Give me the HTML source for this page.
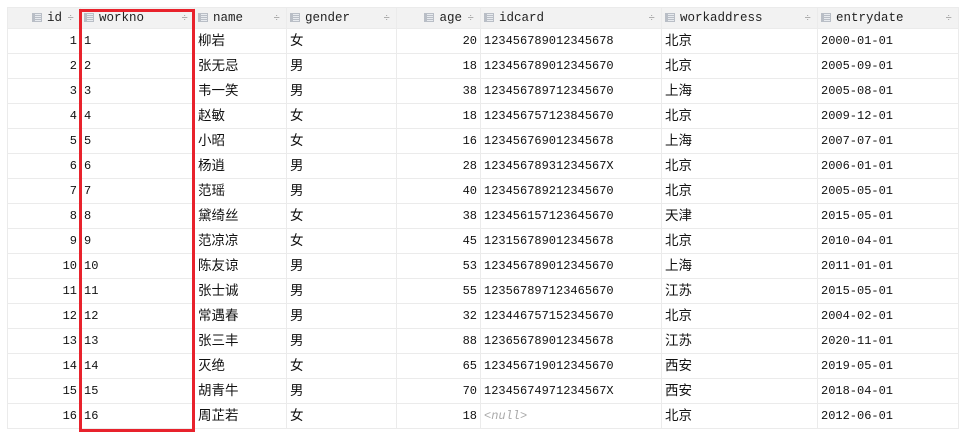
<!DOCTYPE html>
<html><head><meta charset="utf-8"><style>
body{margin:0;width:970px;height:437px;background:#fff;position:relative;overflow:hidden;font-family:"Liberation Mono","Noto Sans CJK SC",monospace;font-size:12px;color:#111}
table{position:absolute;left:7px;top:7px;border-collapse:collapse;table-layout:fixed}
td,th{border:1px solid #ebebeb;height:24px;padding:0 3px;white-space:nowrap;overflow:hidden;font-weight:normal;line-height:16px}
th{height:20px;background:#f2f2f2;text-align:left;color:#222;position:relative;font-size:12.5px}
th .ic{display:inline-block;width:10px;height:9px;background:#b9bec6;margin-right:5px;vertical-align:-1px;position:relative}
th .ic:after{content:"";position:absolute;left:3px;top:1px;width:6px;height:7px;background:repeating-linear-gradient(#e8ebef 0 1px,#b9bec6 1px 2px)}
th .s{position:absolute;right:6px;top:3px;color:#999;font-size:11px}
td.r{text-align:right}
.c{font-size:13.5px;font-family:"Noto Sans CJK SC",sans-serif;line-height:16px;padding-bottom:4px;height:20px}
.null{color:#aaa;font-style:italic}
.box{position:absolute;left:79px;top:9px;width:110px;height:417px;border:3px solid #e8222c}
</style></head><body>
<table>
<colgroup><col style="width:73px"><col style="width:114px"><col style="width:92px"><col style="width:110px"><col style="width:84px"><col style="width:181px"><col style="width:156px"><col style="width:141px"></colgroup>
<tr><th style="text-align:right;padding-right:18px"><span class="ic"></span>id<span class="s">÷</span></th><th><span class="ic"></span>workno<span class="s">÷</span></th><th><span class="ic"></span>name<span class="s">÷</span></th><th><span class="ic"></span>gender<span class="s">÷</span></th><th style="text-align:right;padding-right:18px"><span class="ic"></span>age<span class="s">÷</span></th><th><span class="ic"></span>idcard<span class="s">÷</span></th><th><span class="ic"></span>workaddress<span class="s">÷</span></th><th><span class="ic"></span>entrydate<span class="s">÷</span></th></tr>
<tr><td class="r">1</td><td>1</td><td class="c">柳岩</td><td class="c">女</td><td class="r">20</td><td>123456789012345678</td><td class="c">北京</td><td>2000-01-01</td></tr>
<tr><td class="r">2</td><td>2</td><td class="c">张无忌</td><td class="c">男</td><td class="r">18</td><td>123456789012345670</td><td class="c">北京</td><td>2005-09-01</td></tr>
<tr><td class="r">3</td><td>3</td><td class="c">韦一笑</td><td class="c">男</td><td class="r">38</td><td>123456789712345670</td><td class="c">上海</td><td>2005-08-01</td></tr>
<tr><td class="r">4</td><td>4</td><td class="c">赵敏</td><td class="c">女</td><td class="r">18</td><td>123456757123845670</td><td class="c">北京</td><td>2009-12-01</td></tr>
<tr><td class="r">5</td><td>5</td><td class="c">小昭</td><td class="c">女</td><td class="r">16</td><td>123456769012345678</td><td class="c">上海</td><td>2007-07-01</td></tr>
<tr><td class="r">6</td><td>6</td><td class="c">杨逍</td><td class="c">男</td><td class="r">28</td><td>12345678931234567X</td><td class="c">北京</td><td>2006-01-01</td></tr>
<tr><td class="r">7</td><td>7</td><td class="c">范瑶</td><td class="c">男</td><td class="r">40</td><td>123456789212345670</td><td class="c">北京</td><td>2005-05-01</td></tr>
<tr><td class="r">8</td><td>8</td><td class="c">黛绮丝</td><td class="c">女</td><td class="r">38</td><td>123456157123645670</td><td class="c">天津</td><td>2015-05-01</td></tr>
<tr><td class="r">9</td><td>9</td><td class="c">范凉凉</td><td class="c">女</td><td class="r">45</td><td>123156789012345678</td><td class="c">北京</td><td>2010-04-01</td></tr>
<tr><td class="r">10</td><td>10</td><td class="c">陈友谅</td><td class="c">男</td><td class="r">53</td><td>123456789012345670</td><td class="c">上海</td><td>2011-01-01</td></tr>
<tr><td class="r">11</td><td>11</td><td class="c">张士诚</td><td class="c">男</td><td class="r">55</td><td>123567897123465670</td><td class="c">江苏</td><td>2015-05-01</td></tr>
<tr><td class="r">12</td><td>12</td><td class="c">常遇春</td><td class="c">男</td><td class="r">32</td><td>123446757152345670</td><td class="c">北京</td><td>2004-02-01</td></tr>
<tr><td class="r">13</td><td>13</td><td class="c">张三丰</td><td class="c">男</td><td class="r">88</td><td>123656789012345678</td><td class="c">江苏</td><td>2020-11-01</td></tr>
<tr><td class="r">14</td><td>14</td><td class="c">灭绝</td><td class="c">女</td><td class="r">65</td><td>123456719012345670</td><td class="c">西安</td><td>2019-05-01</td></tr>
<tr><td class="r">15</td><td>15</td><td class="c">胡青牛</td><td class="c">男</td><td class="r">70</td><td>12345674971234567X</td><td class="c">西安</td><td>2018-04-01</td></tr>
<tr><td class="r">16</td><td>16</td><td class="c">周芷若</td><td class="c">女</td><td class="r">18</td><td><span class="null">&lt;null&gt;</span></td><td class="c">北京</td><td>2012-06-01</td></tr>
</table>
<div class="box"></div>
</body></html>
